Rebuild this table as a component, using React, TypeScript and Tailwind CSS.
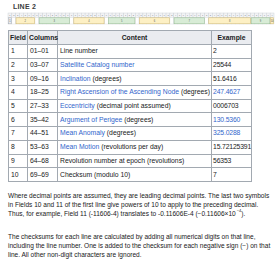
import React from 'react';

const X0 = 8;
const CW = 266 / 69;

const segments: { from: number; to: number; kind: 'gray' | 'y' | 'g'; field: number }[] = [
  { from: 1, to: 1, kind: 'gray', field: 1 },
  { from: 3, to: 7, kind: 'y', field: 2 },
  { from: 9, to: 16, kind: 'g', field: 3 },
  { from: 18, to: 25, kind: 'y', field: 4 },
  { from: 27, to: 33, kind: 'g', field: 5 },
  { from: 35, to: 42, kind: 'y', field: 6 },
  { from: 44, to: 51, kind: 'g', field: 7 },
  { from: 53, to: 63, kind: 'y', field: 8 },
  { from: 64, to: 68, kind: 'g', field: 9 },
  { from: 69, to: 69, kind: 'y', field: 10 },
];

const fills = {
  gray: { fill: '#eaecf0', stroke: '#a2a9b1' },
  y: { fill: '#fdf0c4', stroke: '#c9b26a' },
  g: { fill: '#d8ecd6', stroke: '#8fb68b' },
};

const rows: { field: string; cols: string; link?: string; rest?: string; example: string; exLink?: boolean }[] = [
  { field: '1', cols: '01–01', rest: 'Line number', example: '2' },
  { field: '2', cols: '03–07', link: 'Satellite Catalog number', example: '25544' },
  { field: '3', cols: '09–16', link: 'Inclination', rest: ' (degrees)', example: '51.6416' },
  { field: '4', cols: '18–25', link: 'Right Ascension of the Ascending Node', rest: ' (degrees)', example: '247.4627', exLink: true },
  { field: '5', cols: '27–33', link: 'Eccentricity', rest: ' (decimal point assumed)', example: '0006703' },
  { field: '6', cols: '35–42', link: 'Argument of Perigee', rest: ' (degrees)', example: '130.5360', exLink: true },
  { field: '7', cols: '44–51', link: 'Mean Anomaly', rest: ' (degrees)', example: '325.0288', exLink: true },
  { field: '8', cols: '53–63', link: 'Mean Motion', rest: ' (revolutions per day)', example: '15.72125391' },
  { field: '9', cols: '64–68', rest: 'Revolution number at epoch (revolutions)', example: '56353' },
  { field: '10', cols: '69–69', rest: 'Checksum (modulo 10)', example: '7' },
];

function LineDiagram() {
  return (
    <svg width="280" height="13" viewBox="0 12 280 13" className="block">
      {Array.from({ length: 69 }, (_, i) => (
        <g key={i}>
          <rect x={X0 + i * CW} y={13} width={CW} height={4.5} fill="#f3f4f6" stroke="#c8ccd1" strokeWidth={0.4} />
          <text x={X0 + i * CW + CW / 2} y={16.3} fontSize={2.2} textAnchor="middle" fill="#72777d" fontFamily="Liberation Sans, sans-serif">
            {(i + 1) % 10}
          </text>
          <rect x={X0 + i * CW} y={17.5} width={CW} height={6.5} fill="#ffffff" stroke="#d5d8dc" strokeWidth={0.4} />
        </g>
      ))}
      {segments.map((s) => {
        const c = fills[s.kind];
        const x = X0 + (s.from - 1) * CW;
        const w = (s.to - s.from + 1) * CW;
        return (
          <g key={s.field}>
            <rect x={x + 0.3} y={17.8} width={w - 0.6} height={6} fill={c.fill} stroke={c.stroke} strokeWidth={0.5} />
            <text x={x + w / 2} y={22.3} fontSize={2.6} textAnchor="middle" fill="#54595d" fontFamily="Liberation Sans, sans-serif">
              {s.field}
            </text>
          </g>
        );
      })}
    </svg>
  );
}

export default function App() {
  return (
    <div className="w-[280px] h-[262px] overflow-hidden bg-white text-[#202122] font-['Liberation_Sans',Arial,sans-serif]">
      <div className="pt-[3px] pl-[13px] text-[7px] leading-[8px] font-bold tracking-[0.2px] text-[#3a3d40]">LINE 2</div>
      <div className="mt-[1px]">
        <LineDiagram />
      </div>

      <table className="ml-[8px] mt-[5px] w-[243px] border-collapse text-[6.8px] leading-[8px] table-fixed">
        <colgroup>
          <col className="w-[19px]" />
          <col className="w-[30px]" />
          <col className="w-[154px]" />
          <col className="w-[40px]" />
        </colgroup>
        <thead>
          <tr className="h-[14px] bg-[#eaecf0]">
            <th className="border border-[#a2a9b1] px-[1px] text-left font-bold">Field</th>
            <th className="border border-[#a2a9b1] px-[1px] text-left font-bold">Columns</th>
            <th className="border border-[#a2a9b1] px-[2px] text-center font-bold">Content</th>
            <th className="border border-[#a2a9b1] px-[2px] text-center font-bold">Example</th>
          </tr>
        </thead>
        <tbody>
          {rows.map((r) => (
            <tr key={r.field} className="h-[13.7px]">
              <td className="border border-[#a2a9b1] px-[2px] whitespace-nowrap">{r.field}</td>
              <td className="border border-[#a2a9b1] px-[2px] whitespace-nowrap">{r.cols}</td>
              <td className="border border-[#a2a9b1] px-[2px] whitespace-nowrap overflow-hidden">
                {r.link && <span className="text-[#3366cc]">{r.link}</span>}
                {r.rest}
              </td>
              <td className={`border border-[#a2a9b1] pl-[1px] pr-0 whitespace-nowrap overflow-hidden tracking-[-0.15px] ${r.exLink ? 'text-[#3366cc]' : ''}`}>
                {r.example}
              </td>
            </tr>
          ))}
        </tbody>
      </table>

      <div className="px-[8px] text-[6.55px] leading-[9.3px] text-[#202122]">
        <p className="mt-[9px]">
          Where decimal points are assumed, they are leading decimal points. The last two symbols in Fields 10 and 11 of the first line give powers of 10 to apply to the preceding decimal. Thus, for example, Field 11 (-11606-4) translates to -0.11606E-4 (−0.11606×10<span className="ml-[1px] inline-block align-top text-[4px] leading-[4px]">−4</span>).
        </p>
        <p className="mt-[13px]">
          The checksums for each line are calculated by adding all numerical digits on that line, including the line number. One is added to the checksum for each negative sign (−) on that line. All other non-digit characters are ignored.
        </p>
      </div>
    </div>
  );
}
